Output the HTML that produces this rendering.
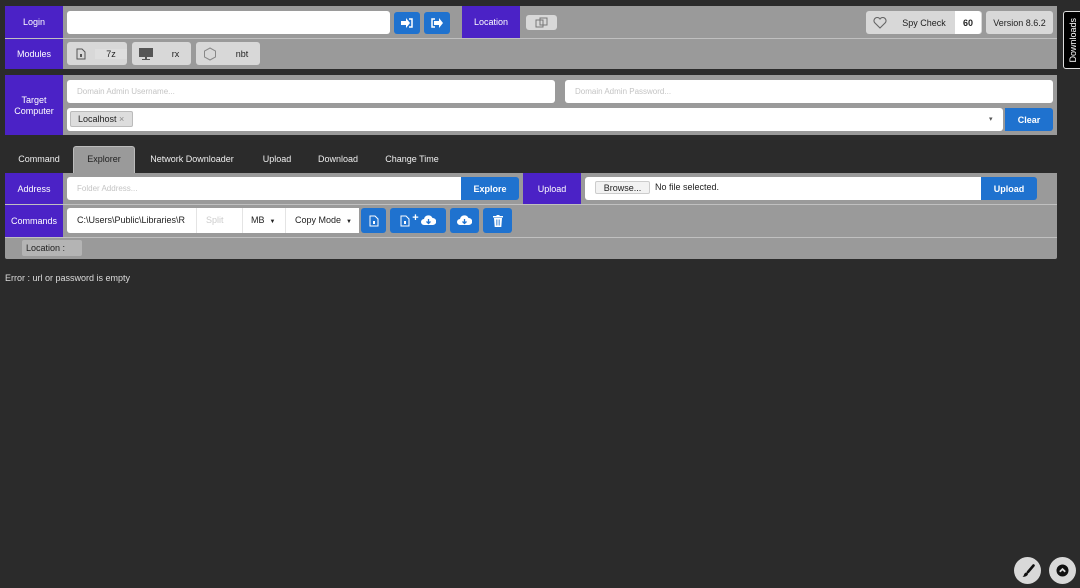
<!DOCTYPE html>
<html><head><style>
*{box-sizing:border-box;margin:0;padding:0}
body{width:1080px;height:588px;background:#2b2b2b;font-family:"Liberation Sans",sans-serif;font-size:9px;color:#222;position:relative;overflow:hidden}
.a{position:absolute}
.p{background:#9a9a9a}
.lab{background:#4b22c6;color:#fff;display:flex;align-items:center;justify-content:center;text-align:center;line-height:11px;padding-top:1px}
.in{background:#fff;border-radius:3px}
.ph{color:#c4c4c4;display:flex;align-items:center;padding-left:10px}
.b{background:#1f72cf;color:#fff;border-radius:3px;display:flex;align-items:center;justify-content:center;font-weight:bold}
.g{background:#d8d8d8;border-radius:3px;display:flex;align-items:center}
.line{height:1px;background:#c0c0c0}
.t{display:flex;align-items:center;justify-content:center;color:#eee}
</style></head><body>
<div class="a p" style="left:5px;top:6px;width:1052px;height:63px"></div>
<div class="a line" style="left:5px;top:38px;width:1052px"></div>
<div class="a lab" style="left:5px;top:6px;width:58px;height:32px">Login</div>
<div class="a lab" style="left:5px;top:39px;width:58px;height:30px">Modules</div>
<div class="a in" style="left:67px;top:11px;width:323px;height:23px"></div>
<div class="a b" style="left:394px;top:12px;width:26px;height:22px"><svg width="12" height="10" viewBox="0 0 12 10"><path d="M0 3h5V0l4 5-4 5V7H0z" fill="#fff"/><path d="M8 1h3v8H8" stroke="#fff" stroke-width="1.5" fill="none"/></svg></div>
<div class="a b" style="left:424px;top:12px;width:26px;height:22px"><svg width="12" height="10" viewBox="0 0 12 10"><path d="M4 1H1v8h3" stroke="#fff" stroke-width="1.5" fill="none"/><path d="M3 3h5V0l4 5-4 5V7H3z" fill="#fff"/></svg></div>
<div class="a lab" style="left:462px;top:6px;width:58px;height:32px">Location</div>
<div class="a g" style="left:526px;top:15px;width:31px;height:15px;justify-content:center"><svg width="14" height="11"><rect x="1" y="3" width="7" height="7" fill="none" stroke="#777"/><rect x="5" y="1" width="7" height="7" fill="none" stroke="#777"/></svg></div>
<div class="a g" style="left:866px;top:11px;width:116px;height:23px"><div style="width:27px;height:23px;display:flex;align-items:center;justify-content:center"><svg width="14" height="12" viewBox="0 0 14 12"><path d="M7 11L1.5 5.5A3 3 0 0 1 7 2a3 3 0 0 1 5.5 3.5z" fill="none" stroke="#666" stroke-width="1.1"/></svg></div><div style="width:62px;text-align:center">Spy Check</div><div style="width:26px;height:23px;background:#fff;display:flex;align-items:center;justify-content:center;font-weight:bold;border-radius:0 3px 3px 0">60</div></div>
<div class="a g" style="left:986px;top:11px;width:67px;height:23px;justify-content:center">Version 8.6.2</div>
<div class="a g" style="left:67px;top:42px;width:60px;height:23px"><div style="width:28px;display:flex;justify-content:center"><svg width="10" height="12"><path d="M1 1h5l3 3v7H1z" fill="none" stroke="#555"/><rect x="4" y="6" width="2" height="3" fill="#555"/></svg></div><div style="flex:1;text-align:center;background:#dedede">7z</div></div>
<div class="a g" style="left:132px;top:42px;width:59px;height:23px"><div style="width:28px;display:flex;justify-content:center"><svg width="14" height="12"><rect x="0" y="0" width="14" height="9" fill="#555"/><rect x="6" y="9" width="2" height="2" fill="#555"/><rect x="3" y="11" width="8" height="1" fill="#555"/></svg></div><div style="flex:1;text-align:center">rx</div></div>
<div class="a g" style="left:196px;top:42px;width:64px;height:23px"><div style="width:28px;display:flex;justify-content:center"><svg width="14" height="14" viewBox="0 0 14 14"><path d="M7 1l5.5 3v6L7 13 1.5 10V4z" fill="none" stroke="#888"/></svg></div><div style="flex:1;text-align:center">nbt</div></div>
<div class="a" style="left:1063px;top:11px;width:20px;height:58px;background:#000;border:1px solid #ddd;border-radius:3px;display:flex;align-items:center;justify-content:center"><div style="writing-mode:vertical-rl;transform:rotate(180deg);color:#fff;font-size:9px;white-space:nowrap">Downloads</div></div>
<div class="a p" style="left:5px;top:75px;width:1052px;height:60px"></div>
<div class="a lab" style="left:5px;top:75px;width:58px;height:60px">Target<br>Computer</div>
<div class="a in ph" style="left:67px;top:80px;width:488px;height:23px;font-size:8px">Domain Admin Username...</div>
<div class="a in ph" style="left:565px;top:80px;width:488px;height:23px;font-size:8px">Domain Admin Password...</div>
<div class="a in" style="left:67px;top:108px;width:936px;height:23px"></div>
<div class="a" style="left:70px;top:111px;width:63px;height:16px;background:#ddd;border:1px solid #bbb;border-radius:2px;display:flex;align-items:center;padding-left:7px">Localhost&nbsp;<span style="color:#888">&#215;</span></div>
<div class="a" style="left:989px;top:115px;font-size:7px;color:#555">&#9662;</div>
<div class="a b" style="left:1005px;top:108px;width:48px;height:23px;border-radius:0 3px 3px 0">Clear</div>
<div class="a" style="left:73px;top:146px;width:62px;height:28px;background:#9a9a9a;border:1px solid #bbb;border-bottom:none;border-radius:3px 3px 0 0"></div>
<div class="a t" style="left:10px;top:152px;width:58px;height:14px">Command</div>
<div class="a t" style="left:73px;top:152px;width:62px;height:14px;color:#222">Explorer</div>
<div class="a t" style="left:140px;top:152px;width:104px;height:14px">Network Downloader</div>
<div class="a t" style="left:250px;top:152px;width:54px;height:14px">Upload</div>
<div class="a t" style="left:308px;top:152px;width:60px;height:14px">Download</div>
<div class="a t" style="left:376px;top:152px;width:72px;height:14px">Change Time</div>
<div class="a p" style="left:5px;top:173px;width:1052px;height:86px;border-radius:0 0 2px 2px"></div>
<div class="a line" style="left:5px;top:204px;width:1052px"></div>
<div class="a line" style="left:5px;top:237px;width:1052px"></div>
<div class="a lab" style="left:5px;top:173px;width:58px;height:31px">Address</div>
<div class="a lab" style="left:5px;top:205px;width:58px;height:32px">Commands</div>
<div class="a in ph" style="left:67px;top:177px;width:396px;height:23px;font-size:8px;border-radius:3px 0 0 3px">Folder Address...</div>
<div class="a b" style="left:461px;top:177px;width:58px;height:23px;border-radius:0 3px 3px 0">Explore</div>
<div class="a lab" style="left:523px;top:173px;width:58px;height:31px">Upload</div>
<div class="a in" style="left:585px;top:177px;width:398px;height:23px;border-radius:3px 0 0 3px"></div>
<div class="a" style="left:595px;top:181px;width:55px;height:13px;background:#f2f2f2;border:1px solid #ccc;border-radius:2px;display:flex;align-items:center;justify-content:center">Browse...</div>
<div class="a" style="left:655px;top:182px">No file selected.</div>
<div class="a b" style="left:981px;top:177px;width:56px;height:23px;border-radius:0 3px 3px 0">Upload</div>
<div class="a in" style="left:67px;top:208px;width:292px;height:25px;border-radius:3px 0 0 3px"></div>
<div class="a" style="left:77px;top:215px">C:\Users\Public\Libraries\R</div>
<div class="a" style="left:196px;top:208px;width:1px;height:25px;background:#e4e4e4"></div>
<div class="a" style="left:206px;top:215px;color:#ccc">Split</div>
<div class="a" style="left:242px;top:208px;width:1px;height:25px;background:#e4e4e4"></div>
<div class="a" style="left:251px;top:215px">MB &nbsp;<span style="font-size:6px">&#9660;</span></div>
<div class="a" style="left:285px;top:208px;width:1px;height:25px;background:#e4e4e4"></div>
<div class="a" style="left:295px;top:215px">Copy Mode &nbsp;<span style="font-size:6px">&#9660;</span></div>
<div class="a b" style="left:361px;top:208px;width:25px;height:25px"><svg width="10" height="12"><path d="M1 1h5l3 3v7H1z" fill="none" stroke="#fff"/><rect x="4" y="6" width="2" height="3" fill="#fff"/></svg></div>
<div class="a b" style="left:390px;top:208px;width:56px;height:25px;gap:2px"><svg width="10" height="12"><path d="M1 1h5l3 3v7H1z" fill="none" stroke="#fff"/><rect x="4" y="6" width="2" height="3" fill="#fff"/></svg><span style="font-size:11px;margin-top:-6px">+</span><svg width="15" height="11" viewBox="0 0 15 11"><path d="M3 10a3 3 0 0 1 0-6 4.5 4.5 0 0 1 8.5-1A3.5 3.5 0 0 1 12 10z" fill="#fff"/><path d="M7.5 4v4M5.5 6.5l2 2 2-2" stroke="#1f72cf" stroke-width="1.3" fill="none"/></svg></div>
<div class="a b" style="left:450px;top:208px;width:29px;height:25px"><svg width="15" height="11" viewBox="0 0 15 11"><path d="M3 10a3 3 0 0 1 0-6 4.5 4.5 0 0 1 8.5-1A3.5 3.5 0 0 1 12 10z" fill="#fff"/><path d="M7.5 4v4M5.5 6.5l2 2 2-2" stroke="#1f72cf" stroke-width="1.3" fill="none"/></svg></div>
<div class="a b" style="left:483px;top:208px;width:29px;height:25px"><svg width="10" height="12" viewBox="0 0 10 12"><rect x="0" y="1" width="10" height="1.5" fill="#fff"/><rect x="3.5" y="0" width="3" height="1.5" fill="#fff"/><path d="M1 3h8l-.7 9H1.7z" fill="#fff"/><path d="M3.5 4.5v6M5 4.5v6M6.5 4.5v6" stroke="#1f72cf" stroke-width=".6"/></svg></div>
<div class="a" style="left:22px;top:240px;width:60px;height:16px;background:#b4b4b4;border-radius:2px;display:flex;align-items:center;padding-left:4px">Location :</div>
<div class="a" style="left:5px;top:273px;color:#ddd;font-size:9px">Error : url or password is empty</div>
<div class="a" style="left:1014px;top:557px;width:27px;height:27px;border-radius:50%;background:#d9d9d9;display:flex;align-items:center;justify-content:center"><svg width="14" height="14" viewBox="0 0 14 14"><path d="M12.5 1.5L7 8" stroke="#111" stroke-width="2.6" stroke-linecap="round"/><path d="M6 8.5c-2.2-.3-2.8 1.5-3.2 2.7S1.5 13 1 13c3.5 0 5.8-1.2 6-3.2z" fill="#111"/></svg></div>
<div class="a" style="left:1049px;top:557px;width:27px;height:27px;border-radius:50%;background:#d9d9d9;display:flex;align-items:center;justify-content:center"><svg width="13" height="13" viewBox="0 0 13 13"><circle cx="6.5" cy="6.5" r="6" fill="#111"/><path d="M3.8 7.8l2.7-2.7 2.7 2.7" stroke="#ddd" stroke-width="1.8" fill="none"/></svg></div>
</body></html>
